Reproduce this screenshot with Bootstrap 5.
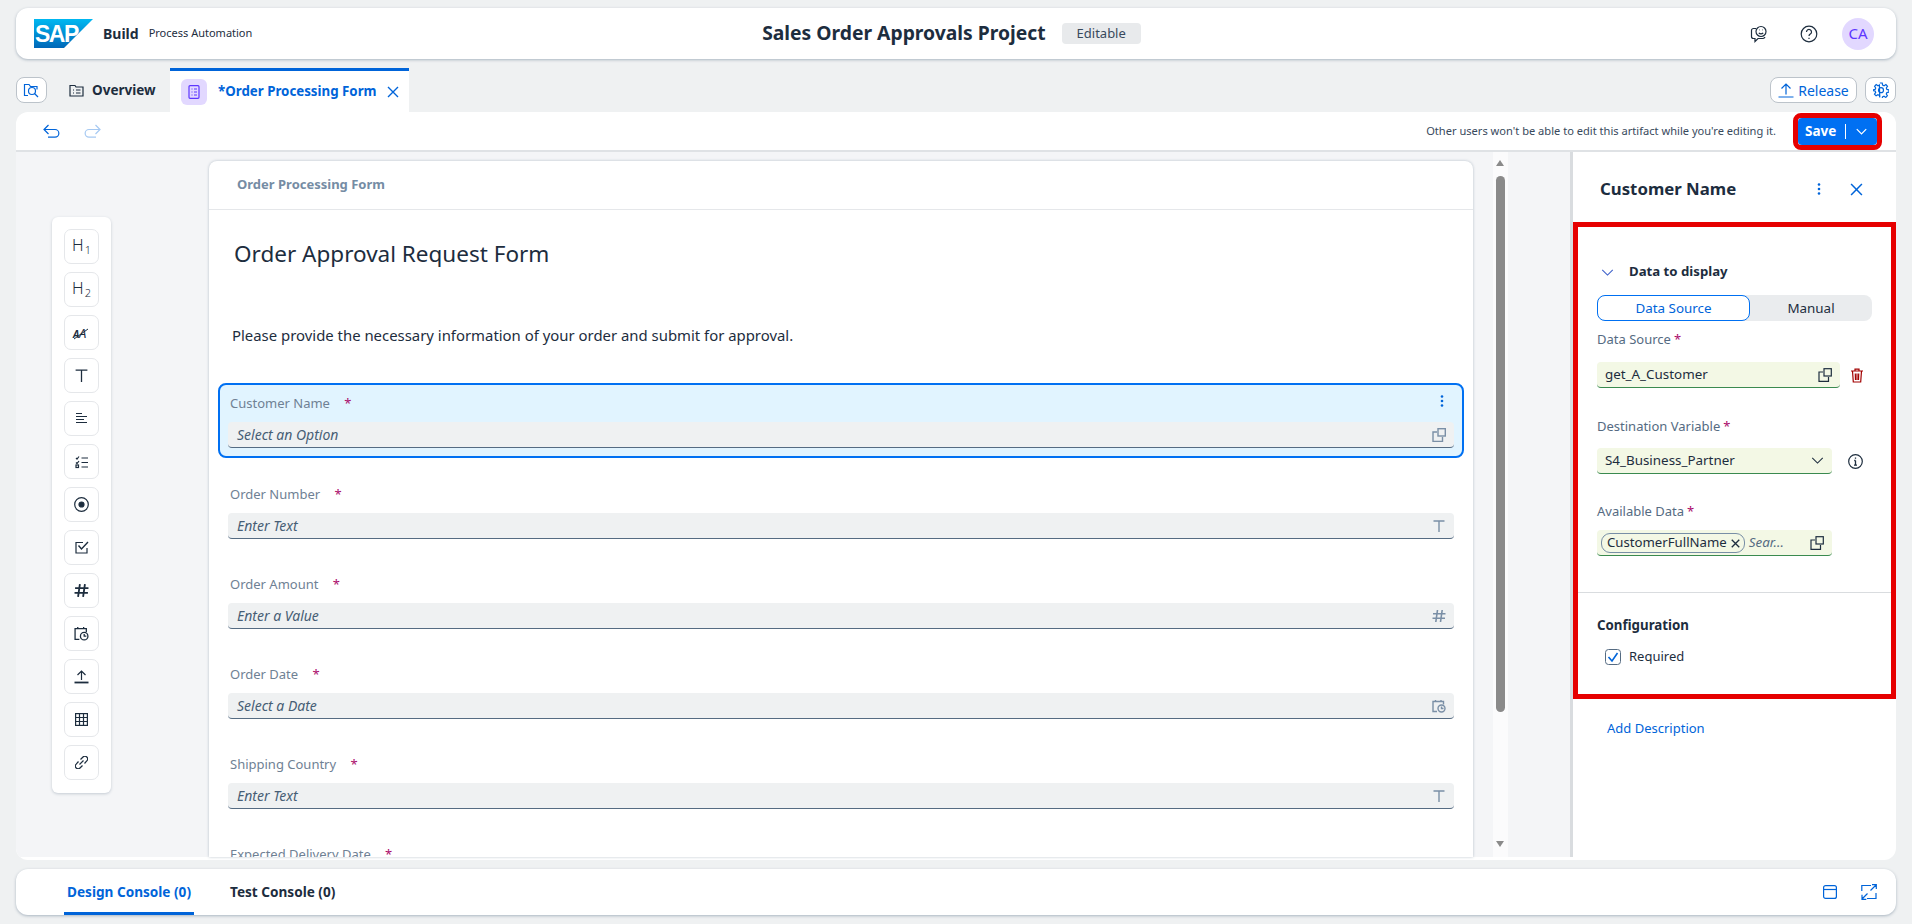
<!DOCTYPE html>
<html lang="en">
<head>
    <meta charset="UTF-8">
    <meta name="viewport" content="width=device-width, initial-scale=1.0">
    <title>Sales Order Approvals Project</title>
    <link href="https://cdn.jsdelivr.net/npm/bootstrap@5.3.3/dist/css/bootstrap.min.css" rel="stylesheet">
    <style>
        html, body { height: 100%; }
        body {
            font-family: "Noto Sans", "Liberation Sans", sans-serif;
            background: #eff1f2;
            color: #1d2d3e;
            font-size: 13px;
            overflow: hidden;
        }
        svg.ico { fill: none; stroke: currentColor; stroke-width: 1.2; flex: none; display: block; }
        .shell { height: 924px; padding: 8px 16px 9px; }

        /* top bar */
        .top-bar { height: 51px; flex: none; background: #fff; border-radius: 12px; box-shadow: 0 1px 3px rgba(85,107,130,.45); padding: 0 22px 0 18px; }
        .top-side { flex: 1 1 0; }
        .brand-name { font-weight: 700; font-size: 14px; margin-left: 9px; }
        .brand-sub { font-size: 11px; margin-left: 10px; }
        .page-title { font-size: 19.3px; font-weight: 700; }
        .state-tag { background: #e8eaec; border-radius: 4px; font-size: 13px; padding: 1px 15px; margin-left: 16px; margin-right: 5px; color: #38495c; }
        .avatar-round { width: 32px; height: 32px; border-radius: 50%; background: #e2d8ff; color: #5d36ff; font-size: 15px; }

        /* tabs */
        .tab-row { height: 44px; flex: none; margin-top: 9px; }
        .ghost-btn { height: 26px; background: #fff; border: 1px solid #bcc3ca; border-radius: 8px; color: #0064d9; padding: 0; font-size: 14px; }
        .tab-plain { margin-left: 19px; font-weight: 700; font-size: 13.5px; height: 44px; width: 102px; padding-left: 3px; }
        .tab-active { width: 239px; height: 44px; margin-left: 2px; background: #fff; border-top: 3px solid #0064d9; color: #0064d9; font-weight: 700; font-size: 13.3px; padding-left: 11px; }
        .tab-glyph { width: 26px; height: 26px; border-radius: 6px; background: #e2d8ff; color: #5d36ff; margin-right: 11px; }

        /* main */
        .work-area { flex: 1 1 0; background: #fff; border-radius: 12px; padding-bottom: 3px; min-height: 0; overflow: hidden; }
        .tool-strip { height: 40px; flex: none; border-bottom: 2px solid #dfe2e5; padding: 0 14px 0 27px; color: #0064d9; }
        .note-text { font-size: 11.1px; margin-right: 17px; color: #38495c; }
        .save-frame { border: 5px solid #e60000; border-radius: 8px; margin-top: 1px; }
        .save-btn { background: #0070f2; color: #fff; font-weight: 700; font-size: 13.5px; height: 27px; width: 79px; border-radius: 4px; padding-left: 7px; }
        .save-btn i { display: block; width: 1px; height: 15px; background: #fff; margin: 0 10px 0 9px; }

        .canvas-pane { background: #f4f5f7; min-width: 0; }
        .palette-col { width: 193px; flex: none; padding: 65px 0 0 36px; }
        .palette-box { width: 59px; height: 576px; background: #fff; border-radius: 6px; box-shadow: 0 1px 3px rgba(85,107,130,.3); padding: 12px 0 0 12px; }
        .pal-btn { width: 35px; height: 35px; border: 1px solid #e5e7ea; border-radius: 7px; margin-bottom: 8px; color: #1d2d3e; }
        .pal-h { font-size: 16px; line-height: 1; font-weight: 300; margin-top: -3px; }
        .pal-h span { font-size: 11px; margin-bottom: -2px; margin-left: 1px; }
        .form-sheet { width: 1264px; flex: none; margin-top: 9px; background: #fff; border-radius: 8px 8px 0 0; box-shadow: 0 0 3px rgba(85,107,130,.4); overflow: hidden; }
        .sheet-head { height: 49px; border-bottom: 1px solid #e5e7ea; padding-left: 28px; font-weight: 700; font-size: 13px; color: #758ca4; }
        .sheet-title { font-size: 22.5px; margin: 22px 0 0 25px; line-height: 44px; font-weight: 400; }
        .sheet-intro { font-size: 14.9px; margin: 48px 0 0 23px; line-height: 22px; }
        .field-wrap { margin: 37px 9px 0; }
        .field-item { height: 75px; border: 2px solid transparent; border-radius: 8px; padding: 0 8px; margin-bottom: 15px; position: relative; }
        .field-on { background: #e1f4ff; border-color: #0070f2; margin-bottom: 16px; }
        .field-cap { height: 37px; color: #6f8194; font-size: 13px; padding: 9px 0 0 2px; }
        .req-mark { color: #aa0a6b; margin-left: 11px; font-size: 13px; }
        .field-in { height: 26px; background: #eff1f2; border-bottom: 1px solid #556b82; border-radius: 4px; font-style: italic; color: #475e75; padding: 0 8px 0 9px; font-size: 14px; }
        .field-in svg { color: #7a8fa6; stroke-width: 1.4; }
        .dots-btn { position: absolute; right: 18px; top: 9px; color: #0064d9; }

        .scroll-col { width: 15px; flex: none; margin-left: 20px; background: #fbfbfc; position: relative; }
        .scroll-up, .scroll-down { position: absolute; left: 3px; width: 0; height: 0; border-left: 4.5px solid transparent; border-right: 4.5px solid transparent; }
        .scroll-up { top: 8px; border-bottom: 6px solid #8a8a8a; }
        .scroll-down { bottom: 10px; border-top: 6px solid #8a8a8a; }
        .scroll-thumb { position: absolute; left: 3px; top: 24px; width: 9px; height: 536px; background: #8a8a8a; border-radius: 5px; }
        .scroll-gap { width: 61px; flex: none; }

        /* properties panel */
        .prop-panel { width: 326px; flex: none; border-left: 3px solid #d9dcdf; }
        .prop-head { height: 70px; padding: 4px 33px 0 27px; }
        .prop-title { font-size: 16.8px; font-weight: 700; }
        .prop-icon { color: #0064d9; }
        .mark-frame { height: 477px; width: 323px; border: 5px solid #e60000; padding: 0 19px; }
        .sec-head { height: 20px; margin-top: 35px; font-weight: 700; font-size: 13.2px; }
        .seg-wrap { width: 275px; height: 26px; margin-top: 13px; background: #eaecee; border-radius: 8px; font-size: 13.4px; }
        .seg-on { width: 153px; height: 26px; background: #fff; border: 1px solid #0070f2; border-radius: 8px; color: #0064d9; }
        .prop-label { height: 18px; line-height: 18px; color: #556b82; font-size: 13px; }
        .prop-label b { color: #aa0a6b; margin-left: 3px; font-weight: 400; }
        .green-in { height: 26px; background: #f3f8e5; border-bottom: 1px solid #3a8a4f; border-radius: 4px; font-size: 13.4px; }
        .token-pill { height: 20px; border: 1px solid #788fa6; border-radius: 9px; padding: 0 4px 0 5px; font-size: 13.2px; }
        .hint-it { font-style: italic; color: #556b82; }
        .frame-rule { height: 1px; background: #d9dcdf; margin: 36px -19px 0; }
        .add-link { color: #0064d9; margin: 20px 0 0 34px; line-height: 19px; font-size: 13px; }

        /* console */
        .console-bar { height: 46px; flex: none; margin-top: 9px; background: #fff; border-radius: 12px; box-shadow: 0 1px 3px rgba(85,107,130,.45); padding: 0 19px 0 48px; font-weight: 700; font-size: 13.6px; }
        .console-tab { height: 46px; padding: 0 3px; margin-right: 33px; }
        .console-on { color: #0064d9; border-bottom: 3px solid #0064d9; padding-top: 3px; }
    </style>
</head>
<body>

<svg width="0" height="0" class="position-absolute">
    <defs>
        <symbol id="i-help" viewBox="0 0 14 14"><path d="M5 4H1v9.400h9.500V9"/><rect x="6" y=".7" width="7.300" height="7.300"/></symbol>
        <symbol id="i-text" viewBox="0 0 14 14"><path d="M1.500 2h11M7 2v11"/></symbol>
        <symbol id="i-hash" viewBox="0 0 14 14"><path d="M5.500 1 3.800 13M10.200 1 8.500 13M1 4.800h12.500M.5 9.200H13"/></symbol>
        <symbol id="i-cal" viewBox="0 0 14 14"><path d="M5 12.500H1V2.500h10.500v3M3.500 1v2M9 1v2"/><circle cx="9.500" cy="9.500" r="3.500"/><path d="M9.500 7.500v2h2"/></symbol>
        <symbol id="i-dots" viewBox="0 0 4 14"><circle cx="2" cy="2.500" r="1.300" fill="currentColor" stroke="none"/><circle cx="2" cy="7" r="1.300" fill="currentColor" stroke="none"/><circle cx="2" cy="11.500" r="1.300" fill="currentColor" stroke="none"/></symbol>
        <symbol id="i-close" viewBox="0 0 12 12"><path d="M1 1l10 10M11 1 1 11"/></symbol>
        <symbol id="i-down" viewBox="0 0 14 8"><path d="M1 1l6 6 6-6"/></symbol>
    </defs>
</svg>

<div class="shell d-flex flex-column">

    <header class="top-bar d-flex align-items-center">
        <div class="top-side d-flex align-items-center">
            <svg width="60" height="30" viewBox="0 0 60 30">
                <defs><linearGradient id="sapBlue" x1="0" y1="0" x2="0" y2="1"><stop offset="0" stop-color="#00b8f1"/><stop offset="1" stop-color="#0067b8"/></linearGradient></defs>
                <polygon points="0,0 59,0 30,29 0,29" fill="url(#sapBlue)"/>
                <text x="1" y="23" font-family="Liberation Sans" font-weight="700" font-size="23" letter-spacing="-1.500" fill="#fff">SAP</text>
            </svg>
            <span class="brand-name">Build</span>
            <span class="brand-sub">Process Automation</span>
        </div>
        <div class="d-flex align-items-center">
            <span class="page-title">Sales Order Approvals Project</span>
            <span class="state-tag">Editable</span>
        </div>
        <div class="top-side d-flex align-items-center justify-content-end gap-4">
            <svg class="ico me-2" width="18" height="18" viewBox="0 0 18 18"><path d="M6 3.500H3.500a2 2 0 0 0-2 2v6a2 2 0 0 0 2 2H5v3l3-3h5a2.500 2.500 0 0 0 2-1.500"/><circle cx="11" cy="6.500" r="5"/><path d="M8.800 7.800c1.200 1.300 3.200 1.300 4.400 0"/><path d="M9.200 4.800h.5M12.300 4.800h.5"/></svg>
            <svg class="ico" width="18" height="18" viewBox="0 0 18 18"><circle cx="9" cy="9" r="7.800"/><path d="M6.500 7a2.500 2.500 0 1 1 3.800 2.100C9.400 9.700 9 10 9 11"/><path d="M9 12.700v1.200"/></svg>
            <span class="avatar-round d-flex align-items-center justify-content-center">CA</span>
        </div>
    </header>

    <div class="tab-row d-flex align-items-center">
        <button class="ghost-btn btn d-flex align-items-center justify-content-center" style="width:31px">
            <svg class="ico" width="17" height="15" viewBox="0 0 17 15"><path d="M5 12.500H1.500V1.500h4.500l1.500 2H14v3"/><circle cx="9" cy="8" r="3.500"/><path d="M11.500 10.500l3.500 3.500"/></svg>
        </button>
        <div class="tab-plain d-flex align-items-center gap-2">
            <svg class="ico" width="15" height="13" viewBox="0 0 15 13"><path d="M1 3V1.500h5l1 1.500h7v9H1z"/><path d="M4 6h1M4 9h1M7 6h4.500M7 9h4.500"/></svg>
            <span>Overview</span>
        </div>
        <div class="tab-active d-flex align-items-center align-self-start">
            <span class="tab-glyph d-flex align-items-center justify-content-center">
                <svg class="ico" width="12" height="14" viewBox="0 0 12 14"><rect x="1" y=".7" width="10" height="12.600" rx="1"/><path d="M3.500 4h1M3.500 7h1M3.500 10h1M6 4h3M6 7h3M6 10h3"/></svg>
            </span>
            <span>*Order Processing Form</span>
            <svg class="ico" style="margin-left:10px;stroke-width:1.400" width="12" height="12"><use href="#i-close"/></svg>
        </div>
        <div class="ms-auto d-flex align-items-center gap-2">
            <button class="ghost-btn btn d-flex align-items-center justify-content-center gap-1" style="width:87px">
                <svg class="ico" width="16" height="16" viewBox="0 0 16 16"><path d="M8 12.500V2M3.500 6.500 8 2l4.500 4.500M.5 15h15"/></svg>
                <span>Release</span>
            </button>
            <button class="ghost-btn btn d-flex align-items-center justify-content-center" style="width:31px">
                <svg class="ico" width="16" height="16" viewBox="0 0 16 16"><path d="M6.800 1h2.400l.4 2 1.500.7 1.800-1.100 1.600 1.700L13.300 6l.6 1.400 2 .4v2.400l-2 .4-.6 1.400 1.100 1.700-1.600 1.700-1.800-1.100-1.500.7-.4 2H6.800"/><path d="M6.800 15.400l-.4-2-1.500-.7-1.800 1.100-1.600-1.700L2.700 10.400 2.100 9 .1 8.600V7.800l2-.4.6-1.400L1.600 4.300l1.600-1.700L5 3.700 6.400 3z"/><circle cx="8" cy="8.200" r="2.500"/></svg>
            </button>
        </div>
    </div>

    <main class="work-area d-flex flex-column">
        <div class="tool-strip d-flex align-items-center">
            <svg class="ico me-4" width="17" height="15" viewBox="0 0 17 15"><path d="M5.500 1 1 5.500 5.500 10M1 5.500h11a3.800 3.800 0 0 1 0 7.700H5"/></svg>
            <svg class="ico" style="opacity:.35" width="17" height="15" viewBox="0 0 17 15"><path d="M11.500 1 16 5.500 11.500 10M16 5.500H5a3.800 3.800 0 0 0 0 7.700h7"/></svg>
            <span class="note-text ms-auto">Other users won't be able to edit this artifact while you're editing it.</span>
            <div class="save-frame">
                <div class="save-btn d-flex align-items-center">Save<i></i>
                    <svg class="ico" style="stroke-width:1.600" width="11" height="7"><use href="#i-down"/></svg>
                </div>
            </div>
        </div>

        <div class="d-flex flex-grow-1" style="min-height:0">
            <section class="canvas-pane flex-grow-1 d-flex">
                <div class="palette-col">
                    <div class="palette-box">
                        <div class="pal-btn d-flex align-items-center justify-content-center"><div class="pal-h d-flex align-items-end">H<span>1</span></div></div>
                        <div class="pal-btn d-flex align-items-center justify-content-center"><div class="pal-h d-flex align-items-end">H<span>2</span></div></div>
                        <div class="pal-btn d-flex align-items-center justify-content-center">
                            <svg width="21" height="18" viewBox="0 0 21 18" fill="#1d2d3e"><text x="2" y="14" font-size="10" font-weight="700" font-style="italic">A</text><text x="8" y="14" font-size="13" font-style="italic">A</text><path d="M3 15 17 5" stroke="#1d2d3e"/></svg>
                        </div>
                        <div class="pal-btn d-flex align-items-center justify-content-center"><svg class="ico" width="15" height="15"><use href="#i-text"/></svg></div>
                        <div class="pal-btn d-flex align-items-center justify-content-center">
                            <svg class="ico" width="13" height="13" viewBox="0 0 13 13"><path d="M1 1.500h6M1 4.500h11M1 7.500h8M1 10.500h11"/></svg>
                        </div>
                        <div class="pal-btn d-flex align-items-center justify-content-center">
                            <svg class="ico" width="14" height="14" viewBox="0 0 14 14"><path d="M1 3l1 1 2-2.500M1 7.500l1 1 2-2.500M6.500 3H13M6.500 7.500H13M6.500 12H13"/><rect x="1" y="10" width="2.500" height="2.500"/></svg>
                        </div>
                        <div class="pal-btn d-flex align-items-center justify-content-center">
                            <svg class="ico" width="15" height="15" viewBox="0 0 15 15"><circle cx="7.500" cy="7.500" r="6.800"/><circle cx="7.500" cy="7.500" r="2.500" fill="currentColor"/></svg>
                        </div>
                        <div class="pal-btn d-flex align-items-center justify-content-center">
                            <svg class="ico" width="14" height="13" viewBox="0 0 14 13"><path d="M12 7v5H1V1.500h7"/><path d="M3.500 4.500 6.500 8 13 1" stroke-width="1.400"/></svg>
                        </div>
                        <div class="pal-btn d-flex align-items-center justify-content-center"><svg class="ico" style="stroke-width:1.700" width="15" height="15"><use href="#i-hash"/></svg></div>
                        <div class="pal-btn d-flex align-items-center justify-content-center"><svg class="ico" width="15" height="15"><use href="#i-cal"/></svg></div>
                        <div class="pal-btn d-flex align-items-center justify-content-center">
                            <svg class="ico" width="15" height="14" viewBox="0 0 15 14"><path d="M7.500 10V1.500M3.500 5l4-4 4 4"/><path d="M.5 12.500h14" stroke-width="1.800"/></svg>
                        </div>
                        <div class="pal-btn d-flex align-items-center justify-content-center">
                            <svg class="ico" width="13" height="13" viewBox="0 0 13 13"><rect x=".6" y=".6" width="11.800" height="11.800"/><path d="M.6 4.500h11.800M.6 8.500h11.800M4.500.6v11.800M8.500.6v11.800"/></svg>
                        </div>
                        <div class="pal-btn d-flex align-items-center justify-content-center">
                            <svg class="ico" width="13" height="13" viewBox="0 0 13 13"><path d="M5.500 3.500 8 1a2.500 2.500 0 0 1 3.800 3.800L9.500 7.500M7.500 9.500 5 12a2.500 2.500 0 0 1-3.800-3.800L3.500 5.500"/><path d="M4.500 8.500l4-4"/></svg>
                        </div>
                    </div>
                </div>

                <div class="form-sheet">
                    <div class="sheet-head d-flex align-items-center">Order Processing Form</div>
                    <h1 class="sheet-title">Order Approval Request Form</h1>
                    <p class="sheet-intro">Please provide the necessary information of your order and submit for approval.</p>
                    <div class="field-wrap">
                        <div class="field-item field-on">
                            <div class="field-cap">Customer Name <span class="req-mark">*</span></div>
                            <svg class="ico dots-btn" width="4" height="14"><use href="#i-dots"/></svg>
                            <div class="field-in d-flex align-items-center justify-content-between"><span>Select an Option</span><svg class="ico" width="14" height="14"><use href="#i-help"/></svg></div>
                        </div>
                        <div class="field-item">
                            <div class="field-cap">Order Number <span class="req-mark">*</span></div>
                            <div class="field-in d-flex align-items-center justify-content-between"><span>Enter Text</span><svg class="ico" width="14" height="14"><use href="#i-text"/></svg></div>
                        </div>
                        <div class="field-item">
                            <div class="field-cap">Order Amount <span class="req-mark">*</span></div>
                            <div class="field-in d-flex align-items-center justify-content-between"><span>Enter a Value</span><svg class="ico" width="14" height="14" style="stroke-width:1.600"><use href="#i-hash"/></svg></div>
                        </div>
                        <div class="field-item">
                            <div class="field-cap">Order Date <span class="req-mark">*</span></div>
                            <div class="field-in d-flex align-items-center justify-content-between"><span>Select a Date</span><svg class="ico" width="14" height="14"><use href="#i-cal"/></svg></div>
                        </div>
                        <div class="field-item">
                            <div class="field-cap">Shipping Country <span class="req-mark">*</span></div>
                            <div class="field-in d-flex align-items-center justify-content-between"><span>Enter Text</span><svg class="ico" width="14" height="14"><use href="#i-text"/></svg></div>
                        </div>
                        <div class="field-item">
                            <div class="field-cap">Expected Delivery Date <span class="req-mark">*</span></div>
                        </div>
                    </div>
                </div>

                <div class="scroll-col">
                    <span class="scroll-up"></span>
                    <span class="scroll-thumb"></span>
                    <span class="scroll-down"></span>
                </div>
                <div class="scroll-gap"></div>
            </section>

            <aside class="prop-panel">
                <div class="prop-head d-flex align-items-center">
                    <span class="prop-title me-auto">Customer Name</span>
                    <svg class="ico prop-icon" style="margin-right:29px" width="4" height="14"><use href="#i-dots"/></svg>
                    <svg class="ico prop-icon" width="13" height="13" style="stroke-width:1.400"><use href="#i-close"/></svg>
                </div>
                <div class="mark-frame">
                    <div class="sec-head d-flex align-items-center">
                        <svg class="ico ms-1" style="color:#3b5ec9" width="13" height="7"><use href="#i-down"/></svg>
                        <span style="margin-left:15px">Data to display</span>
                    </div>
                    <div class="seg-wrap d-flex align-items-center">
                        <span class="seg-on d-flex align-items-center justify-content-center">Data Source</span>
                        <span class="flex-grow-1 text-center">Manual</span>
                    </div>

                    <div class="prop-label" style="margin-top:9px">Data Source<b>*</b></div>
                    <div class="d-flex align-items-center" style="margin-top:14px">
                        <div class="green-in d-flex align-items-center justify-content-between ps-2 pe-2" style="width:243px">
                            <span>get_A_Customer</span>
                            <svg class="ico" width="14" height="14"><use href="#i-help"/></svg>
                        </div>
                        <svg class="ico" style="margin-left:10px;color:#a20000" width="14" height="15" viewBox="0 0 14 15"><path d="M1 3h12M5 3V1.200h4V3M2.500 3l.8 11h7.400l.8-11M5.300 5.500l.2 6.500M7 5.500V12M8.700 5.500 8.500 12"/></svg>
                    </div>

                    <div class="prop-label" style="margin-top:29px">Destination Variable<b>*</b></div>
                    <div class="d-flex align-items-center" style="margin-top:13px">
                        <div class="green-in d-flex align-items-center justify-content-between px-2" style="width:235px">
                            <span>S4_Business_Partner</span>
                            <svg class="ico" width="13" height="7"><use href="#i-down"/></svg>
                        </div>
                        <svg class="ico" style="margin-left:16px" width="15" height="15" viewBox="0 0 15 15"><circle cx="7.500" cy="7.500" r="6.800"/><path d="M7.500 6.500v4.500M6 11.200h3M6.200 6.500h1.300M7.500 3.500v1.200" stroke-width="1.300"/></svg>
                    </div>

                    <div class="prop-label" style="margin-top:28px">Available Data<b>*</b></div>
                    <div class="green-in d-flex align-items-center ps-1 pe-2" style="width:235px;margin-top:10px">
                        <span class="token-pill d-flex align-items-center">CustomerFullName<svg class="ico ms-1" style="margin-top:1px;stroke-width:1.800" width="9" height="9"><use href="#i-close"/></svg></span>
                        <span class="hint-it ms-1 me-auto">Sear...</span>
                        <svg class="ico" width="14" height="14"><use href="#i-help"/></svg>
                    </div>

                    <div class="frame-rule"></div>
                    <div class="fw-bold" style="margin-top:23px;font-size:13.3px;line-height:18px">Configuration</div>
                    <div class="d-flex align-items-center" style="margin:13px 0 0 8px">
                        <svg width="16" height="16" viewBox="0 0 16 16" fill="none"><rect x=".5" y=".5" width="15" height="15" rx="3" stroke="#556b82"/><path d="M3.500 8 7 12l5.500-8" stroke="#0064d9" stroke-width="1.600"/></svg>
                        <span style="margin-left:8px">Required</span>
                    </div>
                </div>
                <div class="add-link">Add Description</div>
            </aside>
        </div>
    </main>

    <footer class="console-bar d-flex align-items-center">
        <span class="console-tab console-on d-flex align-items-center">Design Console (0)</span>
        <span class="console-tab d-flex align-items-center">Test Console (0)</span>
        <div class="ms-auto d-flex align-items-center gap-4" style="color:#0064d9">
            <svg class="ico" width="14" height="14" viewBox="0 0 14 14"><rect x=".6" y=".6" width="12.800" height="12.800" rx="2"/><path d="M.6 4.500h12.800"/></svg>
            <svg class="ico" width="16" height="16" viewBox="0 0 16 16"><path d="M10 1.500H.8V7M15 9v5.500H6M9.500 6.500 15 1M11 .7h4.300V5M6.500 9.500 1 15M1 10.800v4.500h4.300"/></svg>
        </div>
    </footer>
</div>

</body>
</html>
